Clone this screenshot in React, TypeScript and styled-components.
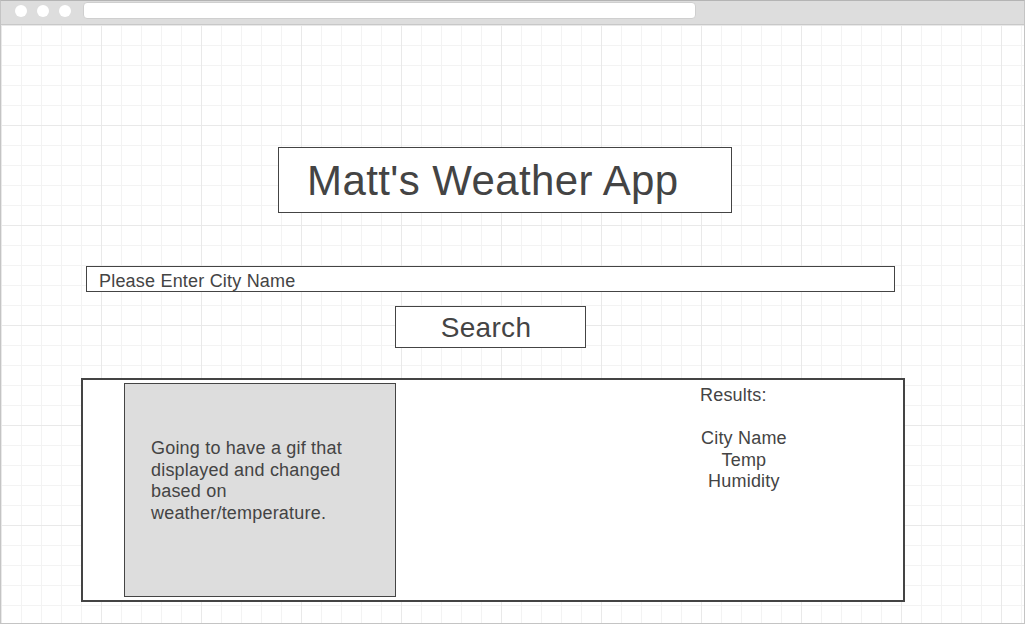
import styled, { createGlobalStyle } from "styled-components";

const GlobalStyle = createGlobalStyle`
  html, body {
    margin: 0;
    padding: 0;
    background: #ffffff;
  }
  body {
    font-family: "Liberation Sans", Arial, sans-serif;
    color: #444444;
  }
`;

const Frame = styled.div`
  width: 1025px;
  height: 624px;
  box-sizing: border-box;
  border: 1px solid #c4c4c4;
  border-top-color: #b4b4b4;
  display: flex;
  flex-direction: column;
  overflow: hidden;
`;

const Toolbar = styled.div`
  height: 23px;
  background: #dddddd;
  border-bottom: 1px solid #c8c8c8;
  display: flex;
  align-items: center;
  padding-left: 14px;
  gap: 10px;
  box-sizing: content-box;
`;

const Dot = styled.span`
  width: 12px;
  height: 12px;
  border-radius: 50%;
  background: #ffffff;
  margin-top: -3px;
`;

const AddressBar = styled.div`
  width: 613px;
  height: 17px;
  margin-left: 2px;
  margin-top: -4px;
  background: #ffffff;
  border-radius: 4px;
  border: 1px solid #cfcfcf;
  box-sizing: border-box;
`;

const Canvas = styled.div`
  flex: 1;
  display: flex;
  flex-direction: column;
  align-items: flex-start;
  padding-left: 80px;
  background-color: #ffffff;
  background-image:
    linear-gradient(to right, #e9e9e9 1px, transparent 1px),
    linear-gradient(to bottom, #e9e9e9 1px, transparent 1px),
    linear-gradient(to right, #f3f3f3 1px, transparent 1px),
    linear-gradient(to bottom, #f3f3f3 1px, transparent 1px);
  background-size: 100px 100px, 100px 100px, 20px 20px, 20px 20px;
`;

const TitleBox = styled.div<{ $indent: number }>`
  margin-top: 122px;
  margin-left: ${(p) => p.$indent}px;
  width: 454px;
  height: 66px;
  box-sizing: border-box;
  border: 1px solid #444444;
  background: #ffffff;
  display: flex;
  align-items: center;
  padding: 2px 0 0 28px;
  font-size: 42px;
  letter-spacing: 0.4px;
  color: #444444;
`;

const CityInput = styled.div<{ $indent: number }>`
  margin-top: 53px;
  margin-left: ${(p) => p.$indent}px;
  width: 809px;
  height: 26px;
  box-sizing: border-box;
  border: 1px solid #444444;
  background: #ffffff;
  display: flex;
  align-items: center;
  padding: 4px 0 0 12px;
  font-size: 18px;
  letter-spacing: 0.2px;
  color: #444444;
`;

const SearchButton = styled.div<{ $indent: number }>`
  margin-top: 14px;
  margin-left: ${(p) => p.$indent}px;
  width: 191px;
  height: 42px;
  box-sizing: border-box;
  border: 1px solid #444444;
  background: #ffffff;
  display: flex;
  align-items: center;
  justify-content: center;
  padding: 2px 9px 0 0;
  font-size: 28px;
  letter-spacing: 0.3px;
  color: #444444;
`;

const ResultsPanel = styled.div`
  margin-top: 30px;
  width: 824px;
  height: 224px;
  box-sizing: border-box;
  border: 2px solid #444444;
  background: #ffffff;
  display: flex;
  padding: 3px 0 2px 41px;
`;

const GifBox = styled.div`
  width: 272px;
  height: 214px;
  box-sizing: border-box;
  border: 1px solid #444444;
  background: #dddddd;
  padding: 54px 0 0 26px;
  font-size: 18px;
  line-height: 1.2;
  letter-spacing: 0.2px;
  color: #444444;
`;

const GifText = styled.p`
  margin: 0;
  width: 226px;
`;

const ResultsColumn = styled.div`
  margin-left: 304px;
  padding-top: 2px;
  display: flex;
  flex-direction: column;
  align-items: flex-start;
  font-size: 18px;
  line-height: 1.2;
  letter-spacing: 0.2px;
  color: #444444;
`;

const ResultsLabel = styled.div`
  margin-bottom: 21.6px;
`;

const ResultsList = styled.div`
  display: flex;
  flex-direction: column;
  align-items: center;
  margin-left: 1px;
`;

export default function App() {
  return (
    <>
      <GlobalStyle />
      <Frame>
        <Toolbar>
          <Dot />
          <Dot />
          <Dot />
          <AddressBar />
        </Toolbar>
        <Canvas>
          <TitleBox $indent={197}>Matt's Weather App</TitleBox>
          <CityInput $indent={5}>Please Enter City Name</CityInput>
          <SearchButton $indent={314}>Search</SearchButton>
          <ResultsPanel>
            <GifBox>
              <GifText>
                Going to have a gif that displayed and changed based on
                weather/temperature.
              </GifText>
            </GifBox>
            <ResultsColumn>
              <ResultsLabel>Results:</ResultsLabel>
              <ResultsList>
                <span>City Name</span>
                <span>Temp</span>
                <span>Humidity</span>
              </ResultsList>
            </ResultsColumn>
          </ResultsPanel>
        </Canvas>
      </Frame>
    </>
  );
}
